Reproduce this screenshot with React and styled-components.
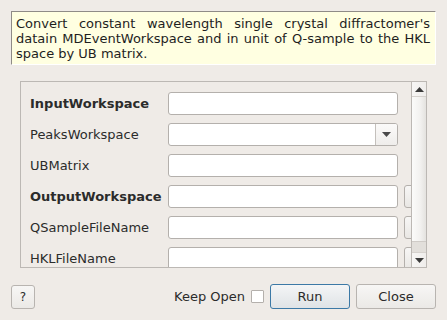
import React from 'react'
import styled, { createGlobalStyle } from 'styled-components';

const GlobalStyle = createGlobalStyle`
  html, body {
    margin: 0;
    padding: 0;
    background: #efebe7;
  }
  body {
    font-family: "DejaVu Sans", "Liberation Sans", sans-serif;
    font-size: 13px;
    color: #2b2b2b;
  }
`;

const rows = [
  { name: 'InputWorkspace', bold: true },
  { name: 'PeaksWorkspace', combo: true },
  { name: 'UBMatrix' },
  { name: 'OutputWorkspace', bold: true, browse: true },
  { name: 'QSampleFileName', browse: true },
  { name: 'HKLFileName', browse: true },
];

const App = () => {
  return (
    <>
      <GlobalStyle />
      <Dialog>
        <Description>
          Convert constant wavelength single crystal diffractomer's datain MDEventWorkspace and in unit of Q-sample to the HKL space by UB matrix.
        </Description>
        <ScrollPanel>
          <Viewport>
            <PropertyGrid>
              {rows.map((row) => (
                <React.Fragment key={row.name}>
                  <Label $bold={row.bold}>{row.name}</Label>
                  {row.combo ? (
                    <Combo>
                      <ComboArrow>
                        <svg width="9" height="5" viewBox="0 0 9 5">
                          <path d="M0 0 H9 L4.5 5 Z" fill="#4a4a4a" />
                        </svg>
                      </ComboArrow>
                    </Combo>
                  ) : (
                    <TextInput />
                  )}
                  {row.browse ? <BrowseButton /> : <span />}
                </React.Fragment>
              ))}
            </PropertyGrid>
          </Viewport>
          <ScrollBar>
            <ArrowButton>
              <svg width="9" height="5" viewBox="0 0 9 5">
                <path d="M0 5 H9 L4.5 0 Z" fill="#3a3a3a" />
              </svg>
            </ArrowButton>
            <Handle />
            <Track />
            <ArrowButton>
              <svg width="9" height="5" viewBox="0 0 9 5">
                <path d="M0 0 H9 L4.5 5 Z" fill="#3a3a3a" />
              </svg>
            </ArrowButton>
          </ScrollBar>
        </ScrollPanel>
        <Footer>
          <SmallButton>?</SmallButton>
          <Spacer />
          <KeepOpen>
            Keep Open
            <CheckBox />
          </KeepOpen>
          <Button $default>Run</Button>
          <Button>Close</Button>
        </Footer>
      </Dialog>
    </>
  );
};

export default App


const Dialog = styled.div`
  width: 447px;
  height: 320px;
  box-sizing: border-box;
  padding: 11px 11px 0 11px;
  display: flex;
  flex-direction: column;
`;

const Description = styled.div`
  height: 54px;
  box-sizing: border-box;
  background: #ffffe1;
  border-top: 1px solid #8f8b87;
  border-left: 1px solid #8f8b87;
  border-right: 1px solid #ffffff;
  border-bottom: 1px solid #ffffff;
  padding: 4px 5px 0 4px;
  line-height: 15px;
  text-align: justify;
  color: #1e1e1e;
`;

const ScrollPanel = styled.div`
  margin: 16px 9px 0 9px;
  height: 187px;
  box-sizing: border-box;
  border: 1px solid #bcb8b4;
  display: flex;
  overflow: hidden;
`;

const Viewport = styled.div`
  flex: 1;
  overflow: hidden;
  padding: 10px 0 0 9px;
`;

const PropertyGrid = styled.div`
  display: grid;
  grid-template-columns: 132px 230px 60px;
  grid-auto-rows: 23px;
  column-gap: 6px;
  row-gap: 8px;
  align-items: center;
`;

const Label = styled.div`
  font-weight: ${(p) => (p.$bold ? 'bold' : 'normal')};
  color: #2b2b2b;
  white-space: nowrap;
`;

const TextInput = styled.div`
  height: 23px;
  box-sizing: border-box;
  background: #ffffff;
  border: 1px solid #b4b0ac;
  border-radius: 3px;
`;

const Combo = styled(TextInput)`
  display: flex;
  justify-content: flex-end;
`;

const ComboArrow = styled.div`
  width: 21px;
  border-left: 1px solid #c4c0bc;
  background: linear-gradient(#fbfaf9, #efedeb);
  display: flex;
  align-items: center;
  justify-content: center;
  border-radius: 0 2px 2px 0;
`;

const BrowseButton = styled.div`
  height: 23px;
  box-sizing: border-box;
  border: 1px solid #b4b0ac;
  border-radius: 3px;
  background: linear-gradient(#f7f6f5, #e9e7e4);
`;

const ScrollBar = styled.div`
  width: 14px;
  flex-shrink: 0;
  border-left: 1px solid #bcb8b4;
  display: flex;
  flex-direction: column;
  background: #efebe7;
`;

const ArrowButton = styled.div`
  height: 14px;
  flex-shrink: 0;
  display: flex;
  align-items: center;
  justify-content: center;
  background: linear-gradient(90deg, #f7f6f5, #efedeb);
  border-bottom: 1px solid #d6d2ce;

  &:last-child {
    border-bottom: none;
    border-top: 1px solid #d6d2ce;
  }
`;

const Handle = styled.div`
  flex: 1;
  background: linear-gradient(90deg, #fbfbfa, #f2f1ef 60%, #e4e2df);
`;

const Track = styled.div`
  height: 10px;
  flex-shrink: 0;
  background: #e2dfdb;
  border-top: 1px solid #cfcbc7;
`;

const Footer = styled.div`
  margin-top: 16px;
  display: flex;
  align-items: center;
  gap: 6px;
`;

const Spacer = styled.div`
  flex: 1;
`;

const SmallButton = styled.div`
  width: 24px;
  height: 24px;
  box-sizing: border-box;
  border: 1px solid #b8b4b0;
  border-radius: 3px;
  background: linear-gradient(#f7f6f5, #ebe9e6);
  display: flex;
  align-items: center;
  justify-content: center;
  font-size: 12px;
  color: #2b2b2b;
`;

const KeepOpen = styled.label`
  display: flex;
  align-items: center;
  gap: 6px;
  color: #2b2b2b;
`;

const CheckBox = styled.span`
  width: 13px;
  height: 13px;
  box-sizing: border-box;
  background: #ffffff;
  border: 1px solid #b4b0ac;
  border-radius: 1px;
`;

const Button = styled.div`
  width: 80px;
  height: 25px;
  box-sizing: border-box;
  border: 1px solid ${(p) => (p.$default ? '#3c79a6' : '#b8b4b0')};
  border-radius: 3px;
  background: ${(p) =>
    p.$default
      ? 'linear-gradient(#f4f5f6, #dfe3e6)'
      : 'linear-gradient(#f7f6f5, #ebe9e6)'};
  display: flex;
  align-items: center;
  justify-content: center;
  color: #2b2b2b;
`;
